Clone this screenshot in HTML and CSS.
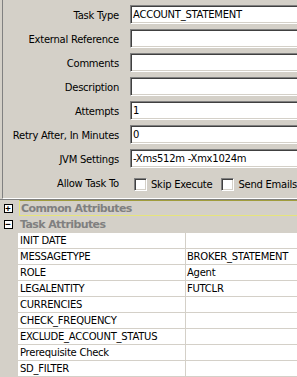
FILE: index.html
```html
<!DOCTYPE html>
<html lang="en">
<head>
    <meta charset="UTF-8">
    <title>Task Details</title>
    <link rel="stylesheet" href="styles.css">
</head>
<body>
<div class="frame">
    <div class="panel">
        <div class="row">
            <label>Task Type</label>
            <div class="field">ACCOUNT_STATEMENT</div>
        </div>
        <div class="row">
            <label>External Reference</label>
            <div class="field"></div>
        </div>
        <div class="row">
            <label>Comments</label>
            <div class="field"></div>
        </div>
        <div class="row">
            <label>Description</label>
            <div class="field"></div>
        </div>
        <div class="row">
            <label>Attempts</label>
            <div class="field">1</div>
        </div>
        <div class="row">
            <label>Retry After, In Minutes</label>
            <div class="field">0</div>
        </div>
        <div class="row">
            <label>JVM Settings</label>
            <div class="field">-Xms512m -Xmx1024m</div>
        </div>
        <div class="row">
            <label>Allow Task To</label>
            <div class="checks">
                <span class="check"></span><span class="check-label">Skip Execute</span>
                <span class="check second"></span><span class="check-label">Send Emails</span>
            </div>
        </div>
    </div>

    <div class="grid">
        <div class="cat selected">
            <div class="gutter"><span class="toggle">+</span></div>
            <div class="cat-title">Common Attributes</div>
        </div>
        <div class="cat">
            <div class="gutter"><span class="toggle">&minus;</span></div>
            <div class="cat-title">Task Attributes</div>
        </div>
        <div class="prop"><div class="gutter"></div><div class="name">INIT DATE</div><div class="value"></div></div>
        <div class="prop"><div class="gutter"></div><div class="name">MESSAGETYPE</div><div class="value">BROKER_STATEMENT</div></div>
        <div class="prop"><div class="gutter"></div><div class="name">ROLE</div><div class="value">Agent</div></div>
        <div class="prop"><div class="gutter"></div><div class="name">LEGALENTITY</div><div class="value">FUTCLR</div></div>
        <div class="prop"><div class="gutter"></div><div class="name">CURRENCIES</div><div class="value"></div></div>
        <div class="prop"><div class="gutter"></div><div class="name">CHECK_FREQUENCY</div><div class="value"></div></div>
        <div class="prop"><div class="gutter"></div><div class="name">EXCLUDE_ACCOUNT_STATUS</div><div class="value"></div></div>
        <div class="prop"><div class="gutter"></div><div class="name">Prerequisite Check</div><div class="value"></div></div>
        <div class="prop last"><div class="gutter"></div><div class="name">SD_FILTER</div><div class="value"></div></div>
    </div>
</div>
</body>
</html>
```

FILE: styles.css
```css
body {
    margin: 0;
    padding: 0;
    background: #d4d0c8;
    font-family: "DejaVu Sans", Verdana, sans-serif;
    font-size: 10px;
    letter-spacing: -0.25px;
    color: #000;
    overflow: hidden;
}

.frame {
    width: 297px;
    height: 377px;
    overflow: hidden;
}

.panel {
    width: 330px;
    margin-left: 2px;
    border-left: 1px solid #808080;
    border-bottom: 1px solid #fff;
    padding: 5px 0 6px 0;
    display: grid;
    row-gap: 5px;
}

.row {
    display: grid;
    grid-template-columns: 116px 1fr;
    column-gap: 11px;
    height: 19px;
    align-items: center;
}

.row label {
    text-align: right;
    white-space: nowrap;
    padding-top: 2px;
}

.field {
    height: 19px;
    line-height: 18px;
    background: #fff;
    border: 1px solid;
    border-color: #808080 #fff #fff #808080;
    box-shadow: inset 1px 1px #404040, inset -1px -1px #d4d0c8;
    padding-left: 2px;
    box-sizing: border-box;
    white-space: nowrap;
}

.checks {
    display: flex;
    align-items: center;
    padding-left: 4px;
    padding-top: 3px;
}

.check {
    width: 13px;
    height: 13px;
    box-sizing: border-box;
    background: #fff;
    border: 1px solid;
    border-color: #808080 #fff #fff #808080;
    box-shadow: inset 1px 1px #404040, inset -1px -1px #d4d0c8;
}

.check.second {
    margin-left: 9px;
}

.check-label {
    margin-left: 4px;
    white-space: nowrap;
}

.grid {
    border-top: 1px solid #808080;
}

.cat {
    display: flex;
    height: 16px;
    box-sizing: border-box;
}

.gutter {
    width: 18px;
    flex: none;
    background: #d4d0c8;
    display: flex;
    align-items: center;
    justify-content: center;
}

.toggle {
    width: 9px;
    height: 9px;
    box-sizing: border-box;
    border: 1px solid #000;
    background: #fff;
    font-size: 9px;
    line-height: 6px;
    letter-spacing: 0;
    text-align: center;
    font-family: "DejaVu Sans Mono", monospace;
    font-weight: bold;
    margin-left: -2px;
}

.cat-title {
    flex: 1;
    margin-left: 1px;
    padding-left: 1px;
    padding-top: 2px;
    font-weight: bold;
    font-size: 11px;
    letter-spacing: -0.6px;
    color: #808080;
    line-height: 14px;
    box-sizing: border-box;
    white-space: nowrap;
}

.cat.selected .cat-title {
    border: 1px solid #e6e47c;
    border-top-color: #a09c3c;
    border-right: none;
    padding-top: 1px;
    line-height: 13px;
}

.prop {
    display: grid;
    grid-template-columns: 18px 168px 1fr;
    height: 16px;
}

.prop .name,
.prop .value {
    background: #fff;
    border-top: 1px solid #d4d0c8;
    line-height: 16px;
    white-space: nowrap;
    overflow: hidden;
}

.prop .name {
    padding-left: 2px;
    border-right: 1px solid #d4d0c8;
}

.prop .value {
    padding-left: 1px;
}

.prop.last {
    height: 17px;
}

.prop.last .name,
.prop.last .value {
    border-bottom: 1px solid #d4d0c8;
}
```
